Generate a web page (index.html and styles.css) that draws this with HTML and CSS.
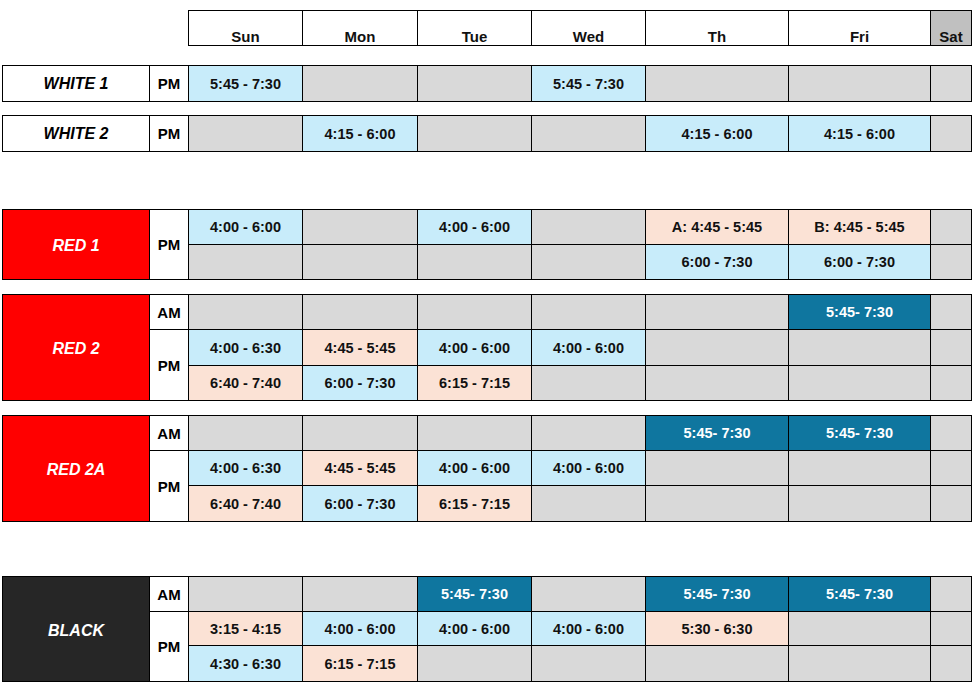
FILE: index.html
```html
<!DOCTYPE html>
<html>
<head>
<meta charset="utf-8">
<link rel="stylesheet" href="styles.css">
</head>
<body>
<div class="page">
  <div class="header">
    <div class="hcell">Sun</div>
    <div class="hcell">Mon</div>
    <div class="hcell">Tue</div>
    <div class="hcell">Wed</div>
    <div class="hcell">Th</div>
    <div class="hcell">Fri</div>
    <div class="hcell sat">Sat</div>
  </div>

  <div class="group g-white1">
    <div class="name light">WHITE 1</div>
    <div class="ampm">PM</div>
    <div class="c blue">5:45 - 7:30</div><div class="c"></div><div class="c"></div><div class="c blue">5:45 - 7:30</div><div class="c"></div><div class="c"></div><div class="c"></div>
  </div>

  <div class="group g-white2">
    <div class="name light">WHITE 2</div>
    <div class="ampm">PM</div>
    <div class="c"></div><div class="c blue">4:15 - 6:00</div><div class="c"></div><div class="c"></div><div class="c blue">4:15 - 6:00</div><div class="c blue">4:15 - 6:00</div><div class="c"></div>
  </div>

  <div class="group g-red1">
    <div class="name red span2">RED 1</div>
    <div class="ampm span2">PM</div>
    <div class="c blue">4:00 - 6:00</div><div class="c"></div><div class="c blue">4:00 - 6:00</div><div class="c"></div><div class="c peach">A: 4:45 - 5:45</div><div class="c peach">B: 4:45 - 5:45</div><div class="c"></div>
    <div class="c"></div><div class="c"></div><div class="c"></div><div class="c"></div><div class="c blue">6:00 - 7:30</div><div class="c blue">6:00 - 7:30</div><div class="c"></div>
  </div>

  <div class="group g-red2">
    <div class="name red span3">RED 2</div>
    <div class="ampm">AM</div>
    <div class="c"></div><div class="c"></div><div class="c"></div><div class="c"></div><div class="c"></div><div class="c teal">5:45- 7:30</div><div class="c"></div>
    <div class="ampm span2">PM</div>
    <div class="c blue">4:00 - 6:30</div><div class="c peach">4:45 - 5:45</div><div class="c blue">4:00 - 6:00</div><div class="c blue">4:00 - 6:00</div><div class="c"></div><div class="c"></div><div class="c"></div>
    <div class="c peach">6:40 - 7:40</div><div class="c blue">6:00 - 7:30</div><div class="c peach">6:15 - 7:15</div><div class="c"></div><div class="c"></div><div class="c"></div><div class="c"></div>
  </div>

  <div class="group g-red2a">
    <div class="name red span3">RED 2A</div>
    <div class="ampm">AM</div>
    <div class="c"></div><div class="c"></div><div class="c"></div><div class="c"></div><div class="c teal">5:45- 7:30</div><div class="c teal">5:45- 7:30</div><div class="c"></div>
    <div class="ampm span2">PM</div>
    <div class="c blue">4:00 - 6:30</div><div class="c peach">4:45 - 5:45</div><div class="c blue">4:00 - 6:00</div><div class="c blue">4:00 - 6:00</div><div class="c"></div><div class="c"></div><div class="c"></div>
    <div class="c peach">6:40 - 7:40</div><div class="c blue">6:00 - 7:30</div><div class="c peach">6:15 - 7:15</div><div class="c"></div><div class="c"></div><div class="c"></div><div class="c"></div>
  </div>

  <div class="group g-black">
    <div class="name dark span3">BLACK</div>
    <div class="ampm">AM</div>
    <div class="c"></div><div class="c"></div><div class="c teal">5:45- 7:30</div><div class="c"></div><div class="c teal">5:45- 7:30</div><div class="c teal">5:45- 7:30</div><div class="c"></div>
    <div class="ampm span2">PM</div>
    <div class="c peach">3:15 - 4:15</div><div class="c blue">4:00 - 6:00</div><div class="c blue">4:00 - 6:00</div><div class="c blue">4:00 - 6:00</div><div class="c peach">5:30 - 6:30</div><div class="c"></div><div class="c"></div>
    <div class="c blue">4:30 - 6:30</div><div class="c peach">6:15 - 7:15</div><div class="c"></div><div class="c"></div><div class="c"></div><div class="c"></div><div class="c"></div>
  </div>
</div>
</body>
</html>
```

FILE: styles.css
```css
* { box-sizing: border-box; }
html, body { margin: 0; padding: 0; background: #ffffff; }
body {
  font-family: "Liberation Sans", Arial, sans-serif;
  font-weight: bold;
  font-size: 14.5px;
  color: #111111;
}
.page {
  padding: 10px 0 0 2px;
  display: flex;
  flex-direction: column;
  align-items: flex-start;
}
.header {
  margin-left: 186px;
  display: grid;
  grid-template-columns: 113px 114px 113px 113px 142px 141px 40px;
  grid-template-rows: 34px;
  gap: 1px;
  padding: 1px;
  background: #000000;
  font-size: 15px;
}
.hcell {
  background: #ffffff;
  display: flex;
  align-items: flex-end;
  justify-content: center;
  padding-bottom: 0;
}
.hcell.sat { background: #c0c0c0; }

.group {
  display: grid;
  grid-template-columns: 146px 38px 113px 114px 113px 113px 142px 141px 40px;
  gap: 1px;
  padding: 1px;
  background: #000000;
}
.g-white1 { margin-top: 19px; grid-template-rows: 35px; }
.g-white2 { margin-top: 13px; grid-template-rows: 35px; }
.g-red1 { margin-top: 57px; grid-template-rows: 34px 34px; }
.g-red2 { margin-top: 14px; grid-template-rows: 34px 35px 34px; }
.g-red2a { margin-top: 14px; grid-template-rows: 34px 34px 35px; }
.g-black { margin-top: 54px; grid-template-rows: 34px 33px 35px; }

.name, .ampm, .c {
  display: flex;
  align-items: center;
  justify-content: center;
}
.name { font-style: italic; font-size: 16px; }
.name.span2, .name.span3 { padding-top: 3px; }
.name.light { background: #ffffff; color: #000000; }
.name.red { background: #ff0000; color: #ffffff; }
.name.dark { background: #262626; color: #ffffff; }
.span2 { grid-row: span 2; }
.span3 { grid-row: span 3; }
.ampm { background: #ffffff; color: #000000; font-size: 15px; }
.c { background: #d9d9d9; }
.c.blue { background: #c8ecfa; }
.c.peach { background: #fbe2d5; }
.c.teal { background: #0f769f; color: #ffffff; }
```
